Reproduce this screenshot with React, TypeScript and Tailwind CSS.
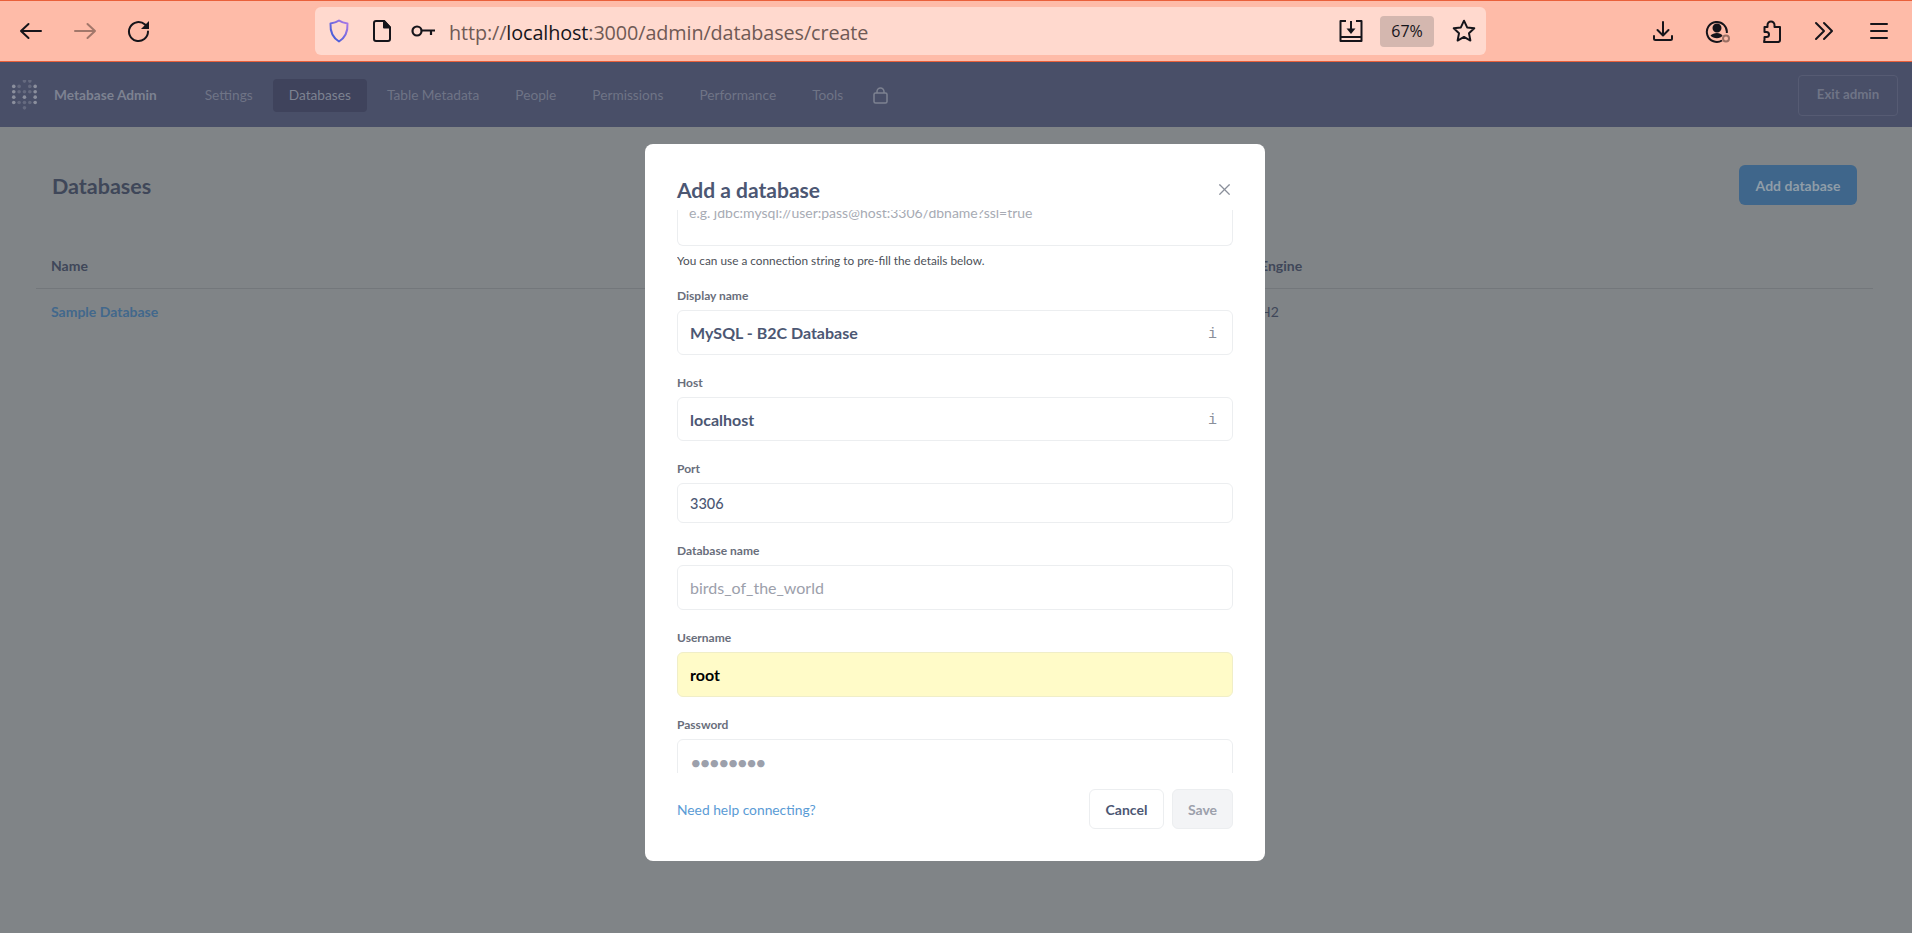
import { ReactNode } from "react"
import { X } from "lucide-react"

const navItems = ["Settings", "Databases", "Table Metadata", "People", "Permissions", "Performance", "Tools"]

function BrowserIcon({ children, className }: { children: ReactNode; className?: string }) {
  return (
    <svg width="24" height="24" viewBox="0 0 24 24" fill="none" stroke="currentColor" strokeWidth="2" strokeLinecap="round" strokeLinejoin="round" className={className}>
      {children}
    </svg>
  )
}

function MetabaseLogo() {
  const dots: [number, number][] = [
    [2, 6], [7, 6], [12, 1], [17, 1], [17, 6], [22, 6], [2, 11], [7, 11], [17, 11], [22, 11],
    [2, 16], [12, 16], [22, 16], [2, 21], [7, 21], [12, 21], [17, 21], [22, 21], [12, 26], [12, 11],
  ]
  return (
    <svg width="28" height="30" viewBox="0 0 25 28" className="shrink-0">
      {dots.map(([x, y]) => (
        <circle key={`${x}-${y}`} cx={x} cy={y} r="1.7" fill={x === 22 || (x === 2 && y < 22) || (x === 12 && y === 16) ? "#8b8f9d" : "#656a7f"} />
      ))}
    </svg>
  )
}

function BrowserBar() {
  return (
    <div className="h-[62px] shrink-0 flex items-center bg-[#febba8] border-t border-b border-t-[#e9603b] border-b-[#e9603b] text-[#15141a] font-['Open_Sans',sans-serif]">
      <div className="w-[315px] shrink-0 flex items-center pl-[19px] gap-[30px]">
        <BrowserIcon>
          <path d="M22 12H2M9.500 5 2 12l7.500 7" />
        </BrowserIcon>
        <BrowserIcon className="text-[#a2776a]">
          <path d="M2 12h20M14.500 5 22 12l-7.500 7" />
        </BrowserIcon>
        <BrowserIcon>
          <path d="M21 12.500a9.500 9.500 0 1 1-3-6.900L21 8.500" />
          <path d="M22 2v8h-8z" fill="currentColor" stroke="none" />
        </BrowserIcon>
      </div>
      <div className="w-[1171px] h-[48px] flex items-center bg-[#ffd9ce] rounded-md">
        <svg width="24" height="26" viewBox="0 0 24 26" fill="none" strokeWidth="2" strokeLinejoin="round" className="ml-3">
          <defs>
            <linearGradient id="shield" x1="1" y1="0" x2="0" y2="1">
              <stop offset="0" stopColor="#b07ae8" />
              <stop offset="1" stopColor="#3257d6" />
            </linearGradient>
          </defs>
          <path d="M12 2.500c2.500 1.800 5 2.600 8.500 3 .4 8-2 14-8.500 18-6.500-4-8.900-10-8.500-18 3.500-.4 6-1.200 8.500-3z" stroke="url(#shield)" />
        </svg>
        <svg width="20" height="24" viewBox="0 0 20 24" fill="none" stroke="currentColor" strokeWidth="2" strokeLinejoin="round" className="ml-[21px]">
          <path d="M2 4a2 2 0 0 1 2-2h8l6 6.500V20a2 2 0 0 1-2 2H4a2 2 0 0 1-2-2z" />
          <path d="M12 2v6.500h6z" fill="currentColor" />
        </svg>
        <svg width="26" height="14" viewBox="0 0 26 14" fill="none" stroke="currentColor" strokeWidth="2.200" className="ml-[19px]">
          <circle cx="6" cy="7" r="4.500" />
          <path d="M10.500 6.500H24M20 6.500v4.500" />
        </svg>
        <div className="ml-[12px] pt-[3px] text-[19.800px] text-[#6f5a55] tracking-[-0.1px]">
          http://<span className="text-[#15141a]">localhost</span>:3000/admin/databases/create
        </div>
        <div className="ml-auto flex items-center">
          <svg width="26" height="24" viewBox="0 0 26 24" fill="none" stroke="currentColor" strokeWidth="2" strokeLinejoin="round">
            <path d="M8 2H2.500v20h21V2H18" />
            <path d="M2.500 18h21" />
            <path d="M13 2v8" />
            <path d="M8.500 9.500h9L13 15z" fill="currentColor" stroke="none" />
          </svg>
          <div className="ml-[16px] w-[54px] h-[31px] flex items-center justify-center rounded bg-[#d4b7af] text-[16px]">67%</div>
          <svg width="26" height="26" viewBox="0 0 24 24" fill="none" stroke="currentColor" strokeWidth="1.800" strokeLinejoin="round" className="ml-[17px] mr-[9px]">
            <path d="M12 2.500l2.900 6.200 6.600.8-4.900 4.600 1.300 6.700-5.900-3.300-5.900 3.300 1.300-6.700-4.900-4.600 6.600-.8z" />
          </svg>
        </div>
      </div>
      <div className="flex-1 flex items-center pl-[165px]">
        <BrowserIcon>
          <path d="M12 3v13M6.500 11l5.500 5.500 5.500-5.500M3 17v2.500a1.500 1.500 0 0 0 1.500 1.500h15a1.500 1.500 0 0 0 1.500-1.500V17" />
        </BrowserIcon>
        <svg width="26" height="26" viewBox="0 0 26 26" fill="none" stroke="currentColor" strokeWidth="2" className="ml-[30px]">
          <path d="M17 22.500A10 10 0 1 1 21.800 15" />
          <circle cx="12" cy="10" r="3.500" fill="currentColor" />
          <path d="M5.500 17.500c3-3.500 10-3.500 12 0-2 3.500-9 3.500-12 0z" fill="currentColor" stroke="none" />
          <circle cx="21" cy="20.500" r="3" stroke="#9a6f64" />
        </svg>
        <svg width="24" height="26" viewBox="0 0 24 26" fill="none" stroke="currentColor" strokeWidth="2" strokeLinejoin="round" className="ml-[29px]">
          <path d="M4 24h14a2 2 0 0 0 2-2V9h-5.500V7a3.500 3.500 0 0 0-7 0v2H4.500v5h2a2.500 2.500 0 0 1 0 5h-2v3a2 2 0 0 0 0 2z" />
        </svg>
        <svg width="22" height="22" viewBox="0 0 22 22" fill="none" stroke="currentColor" strokeWidth="2" strokeLinecap="round" strokeLinejoin="round" className="ml-[29px]">
          <path d="M3 3l8 8-8 8M11 3l8 8-8 8" />
        </svg>
        <svg width="22" height="20" viewBox="0 0 22 20" fill="none" stroke="currentColor" strokeWidth="2" strokeLinecap="round" className="ml-[33px]">
          <path d="M3 3h16M3 10h16M3 17h16" />
        </svg>
      </div>
    </div>
  )
}

function AdminNav() {
  return (
    <nav className="h-[65px] shrink-0 flex items-center bg-[#494f68] pt-[1px] pl-[11px] pr-[14px] text-[13.700px] text-[#6f7486]">
      <MetabaseLogo />
      <span className="ml-[15px] mr-[32px] font-bold text-[#7d8291]">Metabase Admin</span>
      <div className="flex items-center gap-1">
        {navItems.map((item) => (
          <span key={item} className={`h-[33px] flex items-center px-4 rounded ${item === "Databases" ? "bg-[#3f435c] text-[#7d8291]" : ""}`}>
            {item}
          </span>
        ))}
        <svg width="15" height="17" viewBox="0 0 15 17" fill="none" stroke="#7d8291" strokeWidth="1.500" strokeLinejoin="round" className="ml-[10px]">
          <rect x="1" y="6" width="13" height="10" rx="1.500" />
          <path d="M4 6V4.500a3.500 3.500 0 0 1 7 0V6" />
        </svg>
      </div>
      <div className="ml-auto w-[100px] h-[41px] flex items-center justify-center rounded border border-[#565b73] font-bold text-[13.300px] text-[#6f7486]">Exit admin</div>
    </nav>
  )
}

function DatabaseList() {
  return (
    <main className="flex-1 bg-[#808487] pl-[36px] pr-[39px] pt-[38px] text-[#3f4759]">
      <div className="flex items-center justify-between pl-4 pr-4">
        <h1 className="pt-[3px] text-[21.500px] font-bold">Databases</h1>
        <div className="w-[118px] h-10 flex items-center justify-center rounded-md bg-[#3f668b] text-[14px] font-bold text-[#8f9da8]">Add database</div>
      </div>
      <div className="mt-[44px] grid grid-cols-[1224px_1fr] text-[14px]">
        <div className="h-[40px] pl-[15px] pb-[7px] flex items-center font-bold border-b border-[#73777b]">Name</div>
        <div className="h-[40px] pb-[7px] flex items-center font-bold border-b border-[#73777b]">Engine</div>
        <div className="h-[45px] pl-[15px] flex items-center font-bold text-[#42688c]">Sample Database</div>
        <div className="h-[45px] flex items-center">H2</div>
      </div>
    </main>
  )
}

function Field({ label, value, height, tone, info }: { label: string; value: string; height: string; tone: "value" | "placeholder" | "plain" | "autofill" | "secret"; info?: boolean }) {
  const valueClass = {
    value: "text-[16px] font-bold text-[#4c5773]",
    placeholder: "text-[16px] text-[#9ca0ab]",
    plain: "text-[14.500px] font-medium text-[#4c5773]",
    autofill: "text-[16px] font-bold text-black",
    secret: "text-[20px] tracking-[-2.300px] text-[#9ca0ab]",
  }[tone]
  return (
    <div className="mb-5">
      <div className="text-[12px] leading-[15px] font-bold text-[#696e7b] mb-[7px]">{label}</div>
      <div className={`${height} flex items-center justify-between pl-[12px] pr-[15px] rounded-md border ${tone === "autofill" ? "bg-[#fffbc8] border-[#f0eec8]" : "bg-white border-[#eceef0]"}`}>
        <span className={`pt-[1px] ${valueClass}`}>{value}</span>
        {info && <span className="pt-[5px] font-['Liberation_Mono',monospace] text-[15px] text-[#8a8f9a]">i</span>}
      </div>
    </div>
  )
}

function AddDatabaseModal() {
  return (
    <div className="absolute left-[645px] top-[144px] w-[620px] h-[717px] flex flex-col rounded-lg bg-white px-8 text-[#4c5773]">
      <div className="h-[66px] shrink-0 flex items-center justify-between">
        <h2 className="text-[21px] font-bold pt-[25px] leading-none">Add a database</h2>
        <X size={19} strokeWidth={1.5} className="mt-[25px] mr-[-1px] text-[#8a8f9a]" />
      </div>
      <div className="flex-1 overflow-hidden">
        <div className="h-[37px] -mt-[1px] rounded-b-md border border-t-0 border-[#eceef0] pl-[11px] text-[14px] leading-[8px] text-[#a7abb4]">
          <span className="block">e.g. jdbc:mysql://user:pass@host:3306/dbname?ssl=true</span>
        </div>
        <p className="mt-[7px] mb-[20px] text-[11.800px] leading-[15px] text-[#4c5058]">You can use a connection string to pre-fill the details below.</p>
        <Field label="Display name" value="MySQL - B2C Database" height="h-[45px]" tone="value" info />
        <Field label="Host" value="localhost" height="h-[44px]" tone="value" info />
        <Field label="Port" value="3306" height="h-[40px]" tone="plain" />
        <Field label="Database name" value="birds_of_the_world" height="h-[45px]" tone="placeholder" />
        <Field label="Username" value="root" height="h-[45px]" tone="autofill" />
        <Field label="Password" value="••••••••" height="h-[45px]" tone="secret" />
      </div>
      <div className="h-[88px] shrink-0 pt-[16px] flex items-start justify-between text-[14px]">
        <span className="h-10 pt-[2px] flex items-center text-[13.800px] text-[#5a9bd5]">Need help connecting?</span>
        <div className="flex gap-2 font-bold">
          <div className="w-[75px] h-10 flex items-center justify-center rounded-md border border-[#eceef0]">Cancel</div>
          <div className="w-[61px] h-10 flex items-center justify-center rounded-md border border-[#eceef0] bg-[#f3f4f6] text-[#9ca0ab]">Save</div>
        </div>
      </div>
    </div>
  )
}

export default function App() {
  return (
    <div className="relative w-[1912px] h-[933px] flex flex-col overflow-hidden font-['Lato',sans-serif]">
      <BrowserBar />
      <AdminNav />
      <DatabaseList />
      <AddDatabaseModal />
    </div>
  )
}
